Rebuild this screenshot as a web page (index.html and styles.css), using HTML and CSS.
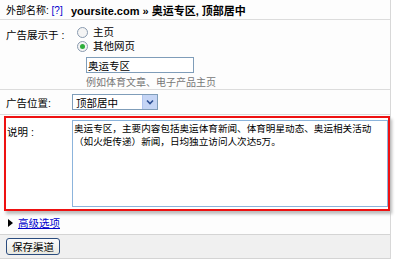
FILE: index.html
```html
<!DOCTYPE html>
<html lang="zh-CN">
  <head>
    <meta charset="UTF-8" />
    <title>外部名称</title>
    <link rel="stylesheet" href="styles.css">
  </head>
  <body>
    <div class="panel">
      <div class="row head">
        <div class="label">外部名称: <a class="help" href="#">[?]</a></div>
        <div class="title">yoursite.com » 奥运专区, 顶部居中</div>
      </div>

      <div class="row show">
        <div class="label">广告展示于 :</div>
        <div class="field">
          <label class="radio"><span class="dot"></span>主页</label>
          <label class="radio"><span class="dot on"></span>其他网页</label>
          <input class="text" type="text" value="奥运专区">
          <div class="hint">例如体育文章、电子产品主页</div>
        </div>
      </div>

      <div class="row pos">
        <div class="label">广告位置:</div>
        <div class="field">
          <div class="select">
            <span>顶部居中</span>
            <span class="arrow">
              <svg viewBox="0 0 8 6" width="8" height="6"><path d="M1 1.5 L4 4.5 L7 1.5" fill="none" stroke="#2c4f94" stroke-width="1.6"/></svg>
            </span>
          </div>
        </div>
      </div>

      <div class="desc">
        <div class="label">说明 :</div>
        <textarea class="area">奥运专区，主要内容包括奥运体育新闻、体育明星动态、奥运相关活动
（如火炬传递）新闻，日均独立访问人次达5万。</textarea>
      </div>

      <div class="row more">
        <span class="tri"></span><a href="#">高级选项</a>
      </div>

      <div class="row foot">
        <button class="btn">保存渠道</button>
      </div>
    </div>
  </body>
</html>
```

FILE: styles.css
```css
body {
  margin: 0;
  background: #fff;
  font-family: "Liberation Sans", "Noto Sans CJK SC", sans-serif;
  font-size: 10px;
  color: #000;
}

.panel {
  width: 390px;
  border-right: 1px solid #d8d8d8;
  background: #fdfdfd;
}

.row {
  display: flex;
  border-bottom: 1px solid #dcdcdc;
}

.label {
  width: 66px;
  padding-left: 6px;
  flex-shrink: 0;
  white-space: nowrap;
}

.head {
  height: 19px;
  align-items: center;
}

.head .label {
  width: 65px;
  font-size: 10px;
}

.help {
  color: #0000cc;
  text-decoration: none;
}

.title {
  font-weight: bold;
  font-size: 11px;
  white-space: nowrap;
}

.show {
  height: 70px;
  padding-top: 5px;
  box-sizing: border-box;
}

.show .label {
  padding-top: 2px;
  font-size: 10.5px;
}

.show .field {
  display: flex;
  flex-direction: column;
  padding-left: 5px;
}

.radio {
  display: flex;
  align-items: center;
  gap: 5px;
  height: 14px;
  line-height: 14px;
  font-size: 10.5px;
}

.dot {
  width: 9px;
  height: 9px;
  border: 1px solid #8a9bb0;
  border-radius: 50%;
  background: #f4f4f4;
  position: relative;
}

.dot.on::after {
  content: "";
  position: absolute;
  left: 2px;
  top: 2px;
  width: 5px;
  height: 5px;
  border-radius: 50%;
  background: #2fae3c;
}

.text {
  margin: 4px 0 0 9px;
  width: 108px;
  height: 17px;
  box-sizing: border-box;
  border: 1px solid #7f9db9;
  padding: 0 1px;
  font: inherit;
  font-size: 10.5px;
}

.hint {
  margin-left: 9px;
  margin-top: 1px;
  color: #777;
}

.pos {
  height: 24px;
  align-items: center;
}

.pos .label {
  font-size: 10.5px;
}

.select {
  display: flex;
  justify-content: space-between;
  align-items: center;
  width: 86px;
  height: 16px;
  box-sizing: border-box;
  border: 1px solid #7f9db9;
  background: #fff;
  padding-left: 3px;
  font-size: 10.5px;
}

.arrow {
  width: 14px;
  height: 14px;
  background: #c5d5f5;
  border-left: 1px solid #b0c4ee;
  display: flex;
  align-items: center;
  justify-content: center;
}

.desc {
  display: flex;
  margin: 1px 0 0 4px;
  width: 386px;
  height: 95px;
  box-sizing: border-box;
  border: 2px solid #ee1111;
  box-shadow: 2px 3px 3px #bbb;
  background: #fff;
  align-items: flex-start;
  padding-top: 2px;
}

.desc .label {
  width: 65px;
  padding-left: 1px;
  padding-top: 4px;
  font-size: 10.5px;
}

.area {
  width: 316px;
  height: 87px;
  box-sizing: border-box;
  border: 1px solid #8cb4dc;
  padding: 1px 1px;
  margin: 0;
  font: inherit;
  font-size: 9.6px;
  line-height: 13px;
  color: #000;
  resize: none;
  overflow: hidden;
}

.more {
  height: 23px;
  align-items: center;
  padding-left: 8px;
  gap: 5px;
  border-bottom: 1px solid #d4d4d4;
}

.tri {
  width: 0;
  height: 0;
  border-top: 4px solid transparent;
  border-bottom: 4px solid transparent;
  border-left: 5px solid #000;
}

.more a {
  color: #0000cc;
  font-size: 10.5px;
}

.foot {
  height: 23px;
  background: #f0f0f0;
  align-items: center;
  padding-left: 6px;
  border-bottom: 1px solid #d4d4d4;
}

.btn {
  width: 54px;
  height: 17px;
  padding: 0;
  font: inherit;
  font-size: 10.5px;
  border: 1px solid #2b4c7e;
  border-radius: 3px;
  background: linear-gradient(#fdfdfd, #e8e8e0);
}
```
